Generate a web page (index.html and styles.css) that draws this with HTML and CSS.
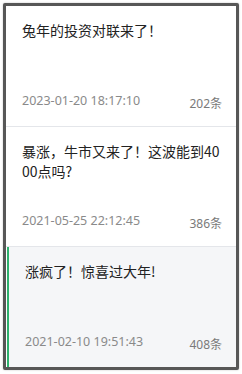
FILE: index.html
```html
<!DOCTYPE html>
<html lang="zh-CN">
<head>
<meta charset="utf-8">
<link rel="stylesheet" href="styles.css">
</head>
<body>
<div class="frame">
  <div class="list">
    <div class="item">
      <div class="title">兔年的投资对联来了！</div>
      <div class="foot"><span class="date">2023-01-20 18:17:10</span><span class="count">202条</span></div>
    </div>
    <div class="item">
      <div class="title">暴涨，牛市又来了！这波能到4000点吗?</div>
      <div class="foot"><span class="date">2021-05-25 22:12:45</span><span class="count">386条</span></div>
    </div>
    <div class="item active">
      <div class="title">涨疯了！惊喜过大年!</div>
      <div class="foot"><span class="date">2021-02-10 19:51:43</span><span class="count">408条</span></div>
    </div>
  </div>
</div>
</body>
</html>
```
FILE: styles.css
```css
html, body {
  margin: 0;
  padding: 0;
  background: #ffffff;
}
body {
  padding: 3px;
  font-family: "Noto Sans CJK SC", "Noto Sans", sans-serif;
}
.frame {
  width: 230px;
  height: 361px;
  border: 3px solid #575757;
  border-radius: 2px;
  box-shadow: 0 0 2px rgba(0,0,0,0.25);
  background: #fff;
  overflow: hidden;
}
.list {
  display: flex;
  flex-direction: column;
  height: 100%;
}
.item {
  flex: 1;
  display: flex;
  flex-direction: column;
  justify-content: space-between;
  padding: 14px 14px 14px 16px;
  border-bottom: 1px solid #e4e6ea;
  box-sizing: border-box;
}
.item:last-child {
  border-bottom: none;
}
.item.active {
  background: #f5f6f8;
  margin-left: 1px;
  border-left: 2px solid #2fb26e;
}
.title {
  font-size: 14px;
  line-height: 20px;
  color: #222;
  word-break: break-all;
}
.foot {
  display: flex;
  justify-content: space-between;
  align-items: flex-end;
  line-height: 16px;
}
.date {
  font-family: "Noto Sans", "Noto Sans CJK SC", sans-serif;
  font-size: 12.5px;
  color: #8a8a8a;
  padding-bottom: 3px;
}
.count {
  font-family: "Noto Sans", "Noto Sans CJK SC", sans-serif;
  font-size: 12px;
  color: #7a7a7a;
}
```
